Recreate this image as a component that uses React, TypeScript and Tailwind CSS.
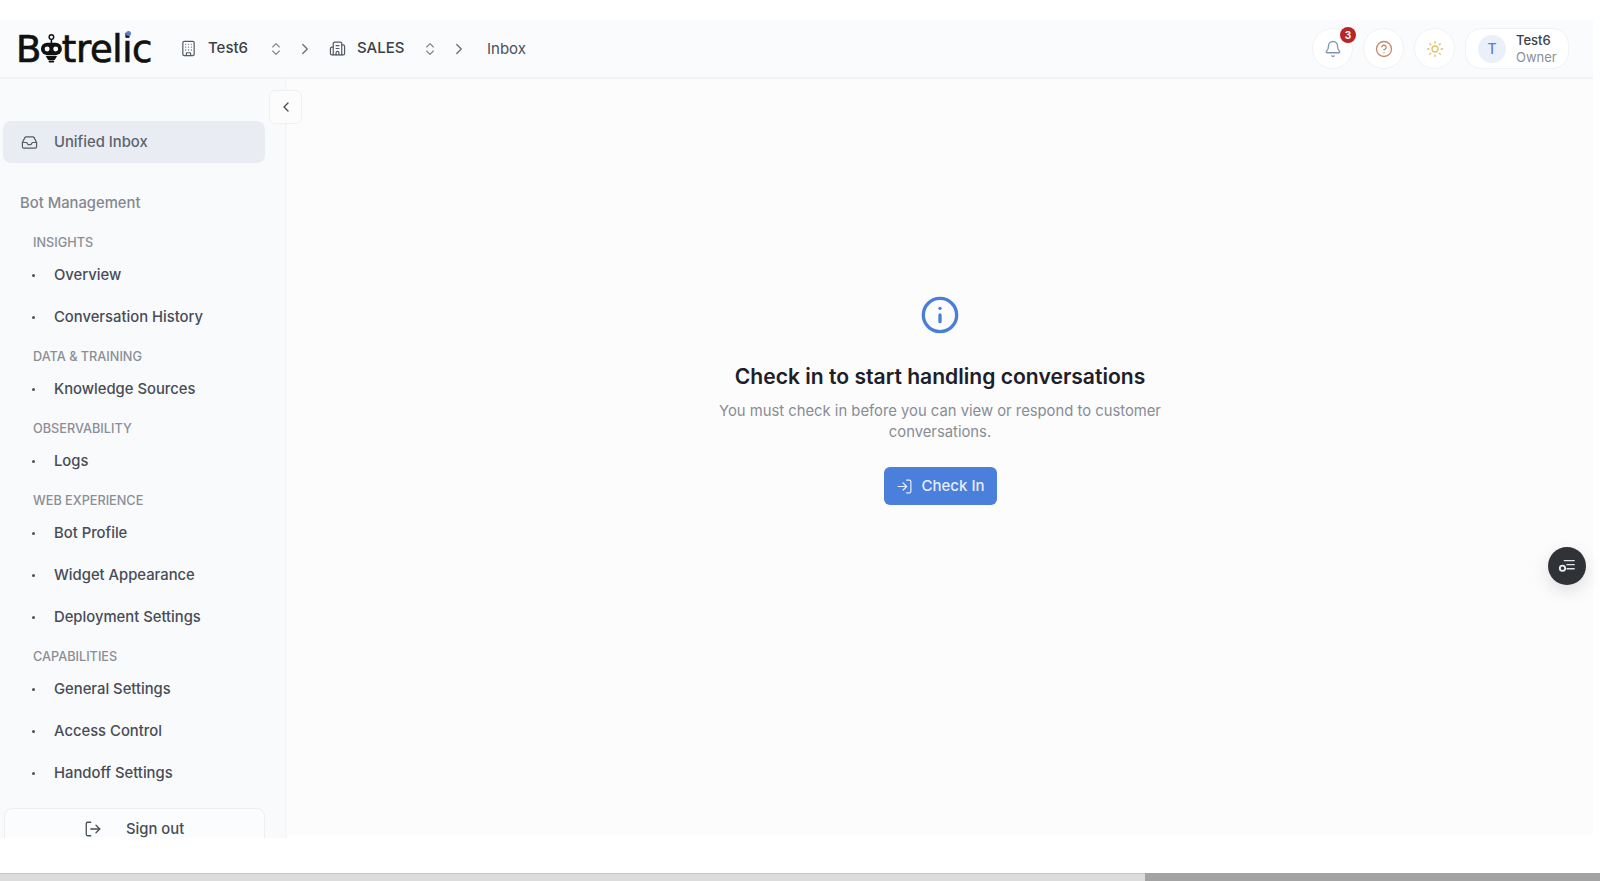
import { Bell, Building, Building2, ChevronLeft, ChevronRight, ChevronsUpDown, CircleHelp, Inbox, Info, LogIn, LogOut, Sun } from "lucide-react";

const sections = [
  { title: "INSIGHTS", items: ["Overview", "Conversation History"] },
  { title: "DATA & TRAINING", items: ["Knowledge Sources"] },
  { title: "OBSERVABILITY", items: ["Logs"] },
  { title: "WEB EXPERIENCE", items: ["Bot Profile", "Widget Appearance", "Deployment Settings"] },
  { title: "CAPABILITIES", items: ["General Settings", "Access Control", "Handoff Settings"] },
];

const RobotO = () => (
  <svg viewBox="0 0 24 32" className="w-[23px] h-[31px] mx-[-1px] mt-[-3px]" aria-hidden="true">
    <circle cx="12" cy="4" r="2.4" fill="none" stroke="#111" strokeWidth="1.5" />
    <rect x="11.2" y="6" width="1.6" height="5" fill="#111" />
    <rect x="1" y="10" width="22" height="13" rx="6.5" fill="#111" />
    <circle cx="7.5" cy="16.5" r="2.6" fill="#fff" />
    <circle cx="16.5" cy="16.5" r="2.6" fill="#fff" />
    <path d="M6 24h12l-2.5 4h-7z" fill="#111" />
    <rect x="9" y="28.6" width="6" height="2" rx="1" fill="#111" />
  </svg>
);

const Logo = () => (
  <div className="relative flex items-center w-[136px] ml-[16px] mt-[2px] text-[37px] leading-none text-[#111] font-['DejaVu_Sans',sans-serif] tracking-[-0.4px] [-webkit-text-stroke:0.7px_#111]">
    <span>B</span>
    <RobotO />
    <span>trelic</span>
    <span className="absolute left-[110px] top-[0px] w-[5px] h-[5px] rounded-full bg-[#5b7fd0]" />
  </div>
);

const Crumb = ({ icon, label, className }: { icon: React.ReactNode; label: string; className: string }) => (
  <div className={`flex items-center ${className}`}>
    {icon}
    <span className="ml-[11px] text-[15px] font-medium text-[#3a3f47]">{label}</span>
  </div>
);

const Header = () => (
  <header className="h-[59px] shrink-0 flex items-center bg-[#fafbfc] border-b-2 border-[#f2f3f5] pr-[24px]">
    <Logo />
    <div className="flex items-center ml-[28px]">
      <Crumb icon={<Building className="w-[17px] h-[17px] text-[#555b64]" strokeWidth={1.7} />} label="Test6" className="w-[88px]" />
      <ChevronsUpDown className="w-4 h-4 text-[#7a7f87]" strokeWidth={1.6} />
      <ChevronRight className="w-[18px] h-[18px] ml-[12px] text-[#6b7078]" strokeWidth={1.8} />
      <Crumb icon={<Building2 className="w-[17px] h-[17px] text-[#555b64]" strokeWidth={1.7} />} label="SALES" className="w-[92px] ml-[15px]" />
      <ChevronsUpDown className="w-4 h-4 ml-[1px] text-[#7a7f87]" strokeWidth={1.6} />
      <ChevronRight className="w-[18px] h-[18px] ml-[12px] text-[#6b7078]" strokeWidth={1.8} />
      <span className="ml-[19px] mt-[1px] text-[15px] text-[#4b5058]">Inbox</span>
    </div>
    <div className="ml-auto flex items-center gap-[10px]">
      <button className="relative w-[41px] h-[41px] rounded-full bg-white border border-[#f1f2f4] flex items-center justify-center">
        <Bell className="w-[18px] h-[18px] text-[#7f94b3]" strokeWidth={1.7} />
        <span className="absolute right-[-4px] top-[-2px] w-4 h-4 rounded-full bg-[#b92428] text-white text-[10px] font-bold flex items-center justify-center">3</span>
      </button>
      <button className="w-[41px] h-[41px] rounded-full bg-white border border-[#f1f2f4] flex items-center justify-center">
        <CircleHelp className="w-[18px] h-[18px] text-[#c98a6c]" strokeWidth={1.8} />
      </button>
      <button className="w-[41px] h-[41px] rounded-full bg-white border border-[#f1f2f4] flex items-center justify-center">
        <Sun className="w-[18px] h-[18px] text-[#e0c468]" strokeWidth={1.8} />
      </button>
      <div className="w-[104px] h-[41px] rounded-2xl bg-white border border-[#f1f2f4] flex items-center pl-[12px]">
        <span className="w-7 h-7 rounded-full bg-[#eaf0fa] text-[#5b84bf] text-[14px] font-medium flex items-center justify-center">T</span>
        <div className="ml-[10px] leading-[17px]">
          <div className="text-[13px] font-medium text-[#3a3f47]">Test6</div>
          <div className="text-[13px] text-[#8a8f97]">Owner</div>
        </div>
      </div>
    </div>
  </header>
);

const Sidebar = () => (
  <aside className="relative w-[287px] h-[759px] shrink-0 overflow-hidden bg-[#f9fafc] border-r-2 border-[#f5f6f7] pt-[42px]">
    <div className="flex items-center h-[42px] ml-[3px] w-[262px] rounded-lg bg-[#e9edf3] pl-[18px] text-[14.8px] font-medium text-[#5d636d]">
      <Inbox className="w-[17px] h-[17px] text-[#565c66]" strokeWidth={1.7} />
      <span className="ml-[16px]">Unified Inbox</span>
    </div>
    <div className="mt-[30px] ml-[20px] h-5 leading-5 text-[14.8px] font-medium text-[#84888f]">Bot Management</div>
    {sections.map((s, i) => (
      <div key={s.title} className={i === 0 ? "mt-[22px]" : "mt-[11px]"}>
        <div className="ml-[33px] h-4 leading-4 text-[12.7px] font-medium text-[#8a8e95]">{s.title}</div>
        <ul className="mt-[3px]">
          {s.items.map((item) => (
            <li key={item} className="flex items-center h-[42px] pl-[32px] text-[14.8px] font-medium text-[#474c55]">
              <span className="w-[3px] h-[3px] rounded-full bg-[#4a4f58]" />
              <span className="ml-[19px]">{item}</span>
            </li>
          ))}
        </ul>
      </div>
    ))}
    <button className="mt-[14px] ml-[4px] w-[261px] h-[44px] rounded-lg bg-[#fbfcfd] border border-[#eceef1] pl-[79px] pb-[2px] flex items-center text-[14.8px] font-medium text-[#474c55]">
      <LogOut className="w-[18px] h-[18px]" strokeWidth={1.7} />
      <span className="ml-[24px]">Sign out</span>
    </button>
  </aside>
);

const Main = () => (
  <main className="relative flex-1 h-[756px] bg-[#fcfcfd] flex flex-col items-center pt-[216px]">
    <Info className="w-[40px] h-[40px] text-[#4a7fd6]" strokeWidth={2} />
    <h1 className="mt-[27px] text-[21.1px] leading-[30px] font-semibold text-[#1c2028]">Check in to start handling conversations</h1>
    <p className="mt-[9px] w-[460px] text-center text-[14.8px] leading-[21px] text-[#888c93]">
      You must check in before you can view or respond to customer conversations.
    </p>
    <button className="mt-[24px] w-[113px] h-[38px] rounded-md bg-[#4a7fdc] flex items-center justify-center gap-[9px] text-[15px] font-medium text-[#e6eefb]">
      <LogIn className="w-[17px] h-[17px]" strokeWidth={1.7} />
      Check In
    </button>
  </main>
);

const App = () => (
  <div className="relative w-[1600px] h-[881px] overflow-hidden bg-white font-['Inter',sans-serif]">
    <div className="h-[873px] pt-[20px] pr-[7px] flex flex-col">
      <Header />
      <div className="relative flex">
        <Sidebar />
        <Main />
        <button className="absolute z-10 left-[269px] top-[11px] w-[33px] h-[34px] rounded-md bg-[#fcfcfd] border border-[#eef0f2] flex items-center justify-center">
          <ChevronLeft className="w-4 h-4 text-[#4b5058]" strokeWidth={2} />
        </button>
      </div>
    </div>
    <button className="absolute left-[1548px] top-[547px] w-[38px] h-[38px] rounded-full bg-[#2f3237] shadow-[0_6px_18px_rgba(0,0,0,0.12)] flex items-center justify-center">
      <svg viewBox="0 0 20 20" className="w-[18px] h-[18px]" aria-hidden="true">
        <path d="M7 4h11M10 8.500h8M10 13h8" stroke="#e5e5e5" strokeWidth="1.6" strokeLinecap="round" fill="none" />
        <circle cx="5" cy="12.500" r="3" fill="none" stroke="#eee" strokeWidth="2" />
      </svg>
    </button>
    <div className="h-[8px] bg-[#a3a3a3] flex">
      <div className="w-[1145px] h-full bg-[#dcdcdc] border-t border-[#c4c4c4]" />
    </div>
  </div>
);

export default App;
